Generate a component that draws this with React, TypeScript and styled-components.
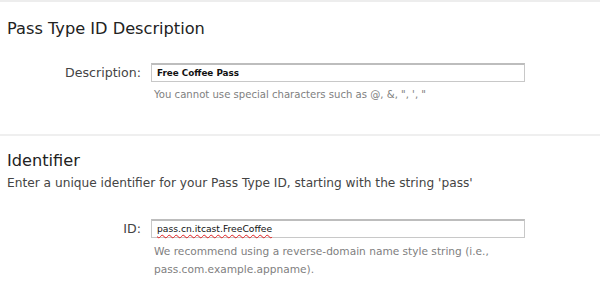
import React from "react";
import styled, { createGlobalStyle } from "styled-components";

const GlobalStyle = createGlobalStyle`
  html, body {
    margin: 0;
    padding: 0;
    background: #ffffff;
  }
  body {
    font-family: "DejaVu Sans", "Liberation Sans", sans-serif;
    color: #333333;
  }
`;

const Page = styled.div`
  width: 600px;
  height: 290px;
  overflow: hidden;
  box-sizing: border-box;
  border-top: 2px solid #ededed;
`;

const Section = styled.section<{ $divider?: boolean }>`
  padding: 0 5px 0 2px;
  border-bottom: ${(p) => (p.$divider ? "2px solid #efefef" : "none")};
`;

const SectionBody = styled.div<{ $top: number; $bottom: number }>`
  padding: ${(p) => p.$top}px 0 ${(p) => p.$bottom}px 5px;
`;

const Heading = styled.h2`
  margin: 0;
  font-size: 16.2px;
  font-weight: normal;
  line-height: 22px;
  color: #222222;
`;

const Intro = styled.p`
  margin: 3px 0 0;
  font-size: 12.2px;
  line-height: 16px;
  color: #444444;
`;

const FieldRow = styled.div<{ $top: number }>`
  display: grid;
  grid-template-columns: 134px 374px;
  column-gap: 10px;
  margin-top: ${(p) => p.$top}px;
`;

const Label = styled.label`
  text-align: right;
  font-size: 12.6px;
  line-height: 19px;
  color: #444444;
`;

const TextBox = styled.div<{ $bold?: boolean }>`
  box-sizing: border-box;
  height: 19px;
  border: 1px solid #c8c8c8;
  border-top: 2px solid #bdbdbd;
  padding: 0 5px;
  font-size: ${(p) => (p.$bold ? "8.8px" : "9.2px")};
  font-weight: ${(p) => (p.$bold ? "bold" : "normal")};
  line-height: 16px;
  color: #111111;
`;

const Misspelled = styled.span`
  text-decoration: underline wavy #e02020;
  text-decoration-thickness: 1px;
  text-underline-offset: 2px;
`;

const Hint = styled.div<{ $size: number }>`
  grid-column: 2;
  padding-left: 3px;
  margin-top: 4px;
  font-size: ${(p) => p.$size}px;
  line-height: 18px;
  color: #808080;
`;

export default function App() {
  return (
    <>
      <GlobalStyle />
      <Page>
        <Section $divider>
          <SectionBody $top={16} $bottom={30}>
            <Heading>Pass Type ID Description</Heading>
            <FieldRow $top={23}>
              <Label>Description:</Label>
              <TextBox $bold>Free Coffee Pass</TextBox>
              <Hint $size={10.1}>You cannot use special characters such as @, &amp;, ", ', "</Hint>
            </FieldRow>
          </SectionBody>
        </Section>
        <Section>
          <SectionBody $top={14} $bottom={0}>
            <Heading>Identifier</Heading>
            <Intro>Enter a unique identifier for your Pass Type ID, starting with the string 'pass'</Intro>
            <FieldRow $top={28}>
              <Label>ID:</Label>
              <TextBox>
                <Misspelled>pass.cn.itcast.FreeCoffee</Misspelled>
              </TextBox>
              <Hint $size={10.6}>
                We recommend using a reverse-domain name style string (i.e.,
                <br />
                pass.com.example.appname).
              </Hint>
            </FieldRow>
          </SectionBody>
        </Section>
      </Page>
    </>
  );
}
